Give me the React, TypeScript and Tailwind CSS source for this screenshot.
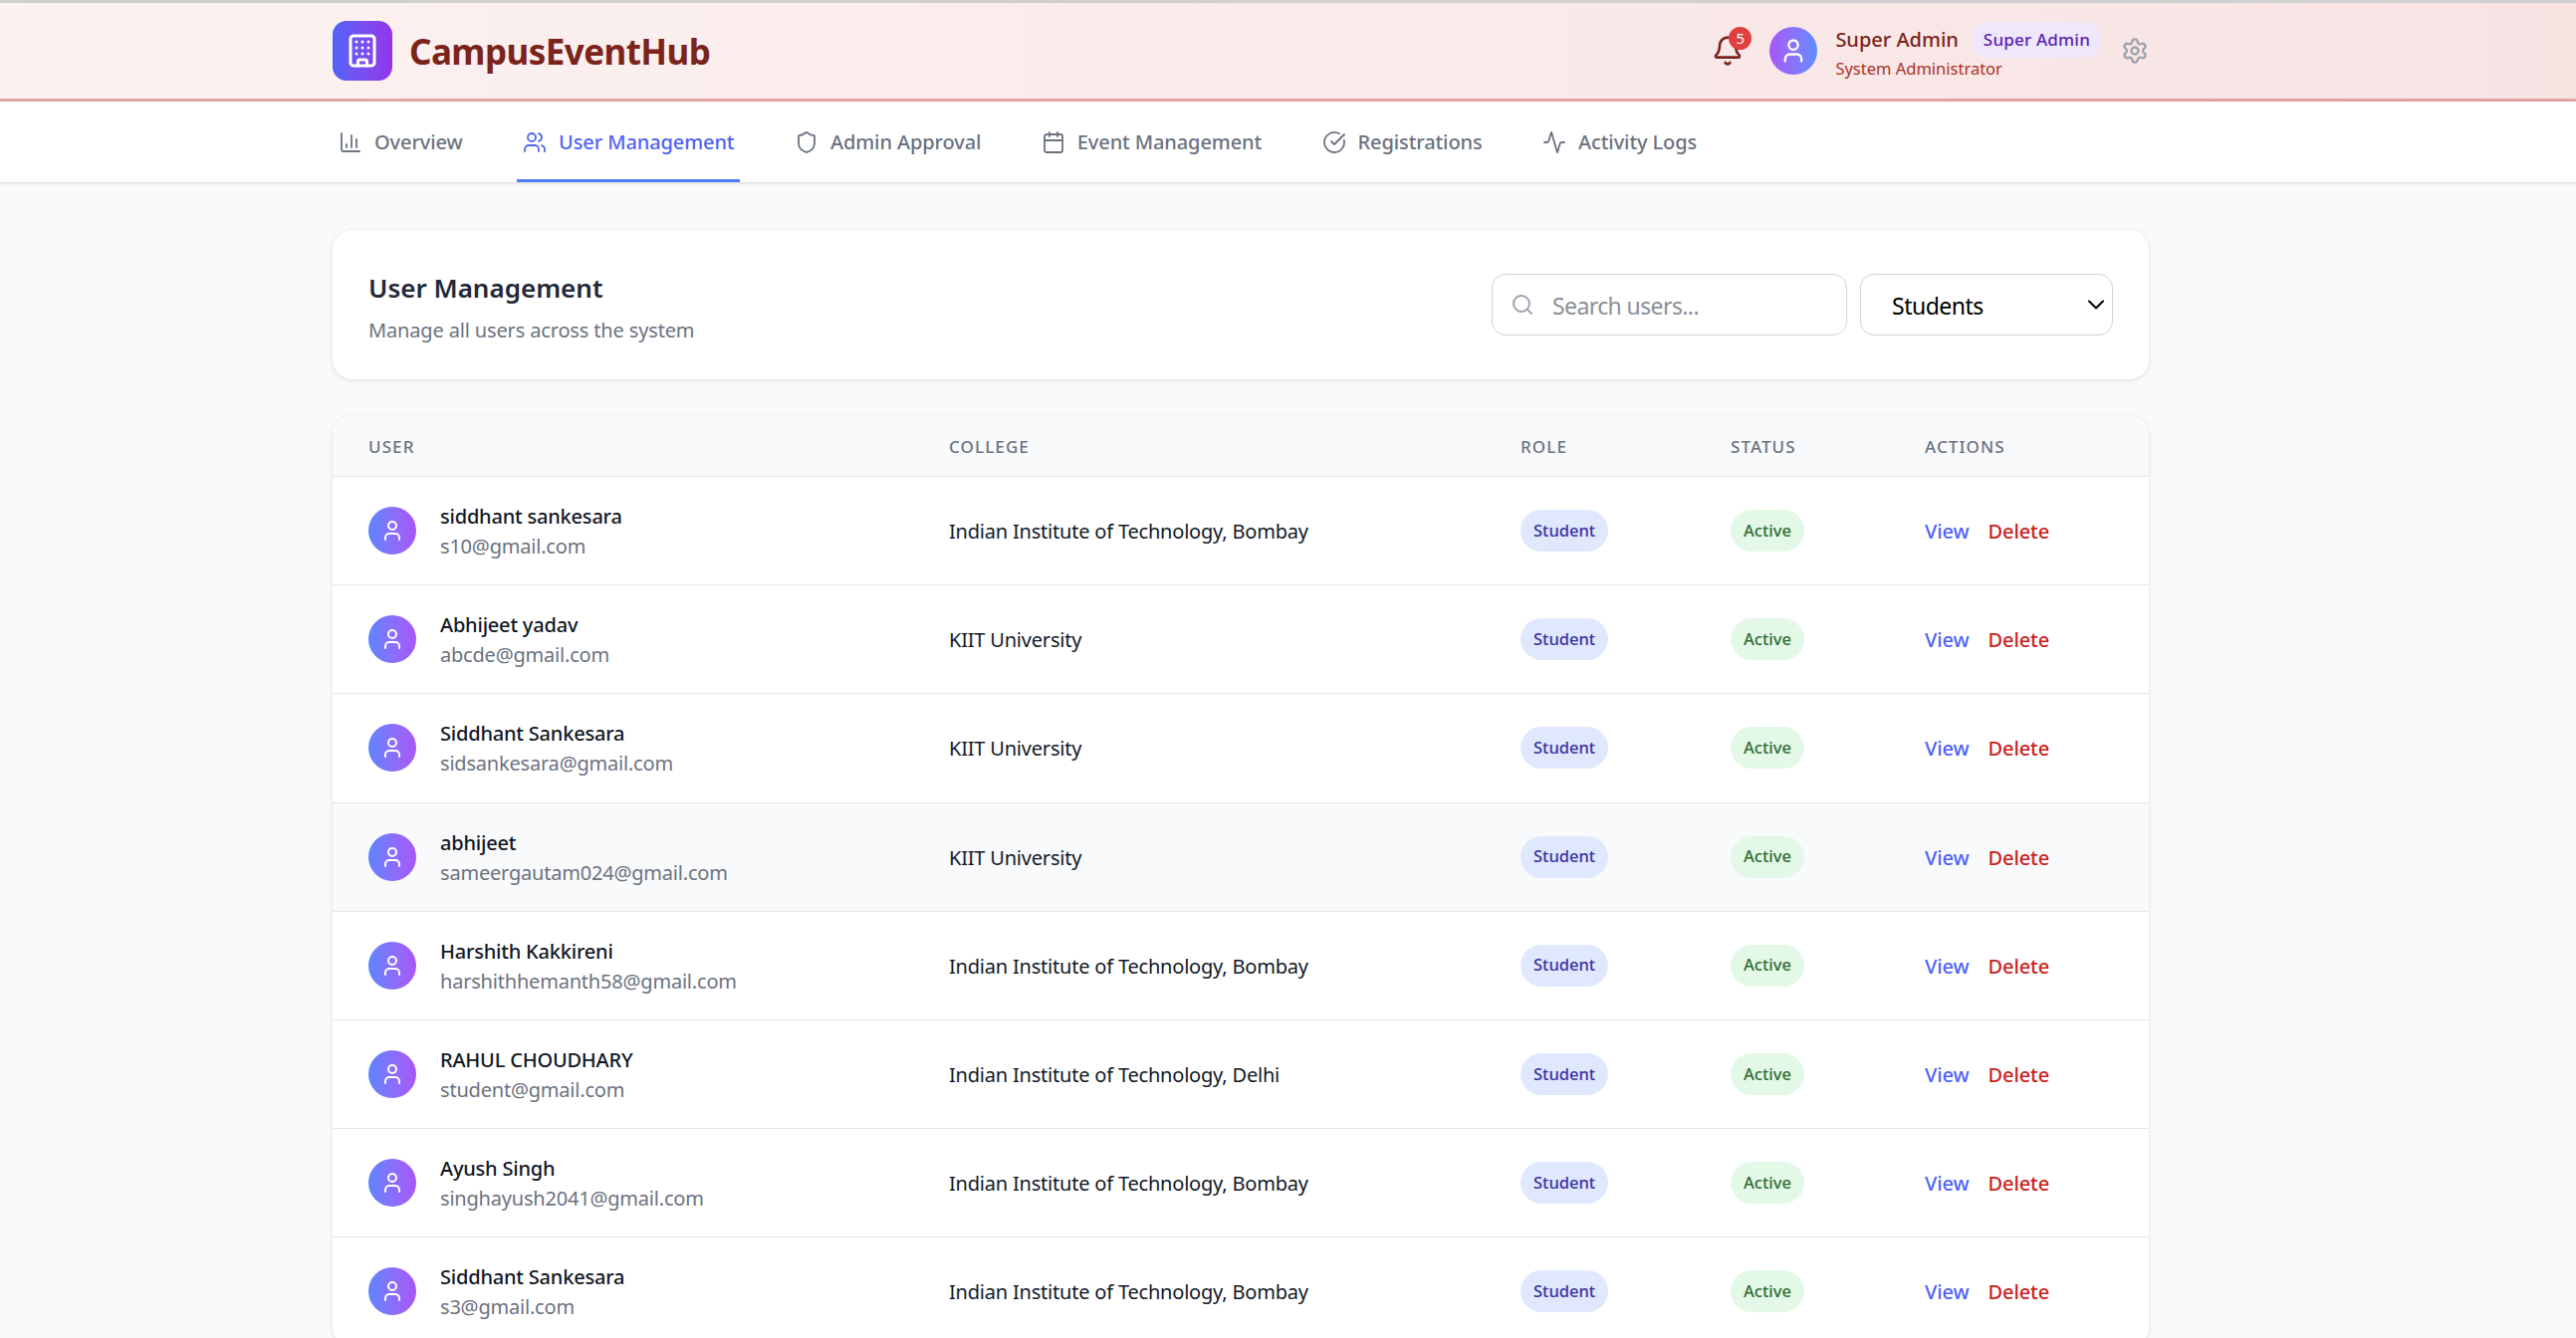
import { Activity, Bell, Building, Calendar, ChartColumn, ChevronDown, CircleCheckBig, Search, Settings, Shield, User, Users } from "lucide-react";

const tabs = [
  { label: "Overview", icon: ChartColumn },
  { label: "User Management", icon: Users, active: true },
  { label: "Admin Approval", icon: Shield },
  { label: "Event Management", icon: Calendar },
  { label: "Registrations", icon: CircleCheckBig },
  { label: "Activity Logs", icon: Activity },
];

const users = [
  { name: "siddhant sankesara", email: "s10@gmail.com", college: "Indian Institute of Technology, Bombay" },
  { name: "Abhijeet yadav", email: "abcde@gmail.com", college: "KIIT University" },
  { name: "Siddhant Sankesara", email: "sidsankesara@gmail.com", college: "KIIT University" },
  { name: "abhijeet", email: "sameergautam024@gmail.com", college: "KIIT University", hover: true },
  { name: "Harshith Kakkireni", email: "harshithhemanth58@gmail.com", college: "Indian Institute of Technology, Bombay" },
  { name: "RAHUL CHOUDHARY", email: "student@gmail.com", college: "Indian Institute of Technology, Delhi" },
  { name: "Ayush Singh", email: "singhayush2041@gmail.com", college: "Indian Institute of Technology, Bombay" },
  { name: "Siddhant Sankesara", email: "s3@gmail.com", college: "Indian Institute of Technology, Bombay" },
];

const cols = "grid grid-cols-[583px_574px_211px_195px_1fr] px-9";

export default function App() {
  return (
    <div className="h-[1344px] overflow-hidden bg-[#f9fafb] font-['Noto_Sans',sans-serif]">
      <header className="h-[102px] border-t-[3px] border-t-[#d0d0d0] border-b-[3px] border-b-[#e5a5a5] bg-gradient-to-r from-[#fcf3f1] to-[#f8e3e3]">
        <div className="w-[1824px] ml-[334px] h-full flex items-center justify-between">
          <div className="flex items-center gap-[17px]">
            <div className="w-[60px] h-[60px] rounded-[14px] bg-gradient-to-r from-[#4f63f6] to-[#9333ea] flex items-center justify-center">
              <Building className="w-9 h-9 text-white" strokeWidth={2} />
            </div>
            <h1 className="pt-[3px] text-[35px] font-bold text-[#7b241c] tracking-[-0.55px]">CampusEventHub</h1>
          </div>
          <div className="flex items-center">
            <div className="relative mr-[26px]">
              <Bell className="w-8 h-8 text-[#7b241c]" />
              <span className="absolute -top-2 -right-2 w-[23px] h-[23px] rounded-full bg-[#e04040] text-white text-[15px] flex items-center justify-center">5</span>
            </div>
            <div className="w-12 h-12 rounded-full bg-gradient-to-r from-[#a855f7] to-[#5b8cff] flex items-center justify-center mr-[18px]">
              <User className="w-7 h-7 text-white" />
            </div>
            <div>
              <div className="flex items-center gap-[13px]">
                <span className="text-[20px] font-medium text-[#7b241c]">Super Admin</span>
                <span className="h-9 flex items-center text-[17px] font-medium text-[#5b21b6] bg-[#efe7fa] rounded-full px-3 tracking-[0.2px]">Super Admin</span>
              </div>
              <div className="text-[16.5px] leading-[22px] text-[#a93226]">System Administrator</div>
            </div>
            <Settings className="w-7 h-7 text-[#9ca3af] ml-[19px]" />
          </div>
        </div>
      </header>

      <nav className="h-[81px] bg-white shadow-[0_1px_3px_rgba(0,0,0,0.15)]">
        <div className="w-[1824px] ml-[334px] h-full flex gap-[48.5px]">
          {tabs.map((t) => (
            <div
              key={t.label}
              className={
                t.active
                  ? "flex items-center gap-3 px-1.5 h-full border-y-[3px] border-t-transparent border-b-[#4f7df5] text-[#4f63f6] text-[20px] font-medium tracking-[-0.1px]"
                  : "flex items-center gap-3 px-1.5 h-full border-y-[3px] border-transparent text-[#6b7280] text-[20px] font-medium tracking-[-0.1px]"
              }
            >
              <t.icon className="w-6 h-6" strokeWidth={1.8} />
              <span>{t.label}</span>
            </div>
          ))}
        </div>
      </nav>

      <main className="w-[1824px] ml-[334px] pt-[48px]">
        <section className="h-[150px] bg-white rounded-[20px] shadow-[0_1px_4px_rgba(0,0,0,0.12)] px-9 flex items-center justify-between">
          <div className="pt-[5px]">
            <h2 className="text-[26px] leading-[36px] font-semibold text-[#1f2937]">User Management</h2>
            <p className="text-[20px] leading-[30px] mt-[10px] text-[#6b7280] tracking-[-0.15px]">Manage all users across the system</p>
          </div>
          <div className="flex gap-[13px]">
            <div className="w-[357px] h-[62px] border border-[#d1d5db] rounded-[14px] flex items-center pl-[18px] gap-[18px]">
              <Search className="w-[24px] h-[24px] text-[#9ca3af]" />
              <span className="pt-0.5 text-[23px] text-[#8a8f98] tracking-[-0.6px]">Search users...</span>
            </div>
            <div className="w-[254px] h-[62px] border border-[#d1d5db] rounded-[14px] flex items-center justify-between pl-[31px] pr-0.5">
              <span className="pt-0.5 text-[23px] text-black tracking-[-0.5px]">Students</span>
              <ChevronDown className="w-7 h-7 text-black" strokeWidth={1.8} />
            </div>
          </div>
        </section>

        <section className="mt-[36px] bg-white rounded-[20px] shadow-[0_1px_4px_rgba(0,0,0,0.12)] overflow-hidden">
          <div className={`${cols} h-[62px] items-center bg-[#f9fafb] border-b border-[#e5e7eb] text-[17px] font-medium text-[#6b7280] tracking-[1.1px]`}>
            <div className="pt-0.5">USER</div>
            <div className="pt-0.5">COLLEGE</div>
            <div className="pt-0.5">ROLE</div>
            <div className="pt-0.5">STATUS</div>
            <div className="pt-0.5">ACTIONS</div>
          </div>
          {users.map((u) => (
            <div
              key={u.email}
              className={
                u.hover
                  ? `${cols} h-[109.2px] items-center border-b border-[#e5e7eb] bg-[#f9fafb]`
                  : `${cols} h-[109.2px] items-center border-b border-[#e5e7eb]`
              }
            >
              <div className="flex items-center gap-6">
                <div className="w-12 h-12 rounded-full bg-gradient-to-r from-[#5b84ff] to-[#a855f7] flex items-center justify-center">
                  <User className="w-6 h-6 text-white" />
                </div>
                <div className="pt-0.5 tracking-[-0.2px]">
                  <div className="text-[20px] leading-[30px] font-medium text-[#111827]">{u.name}</div>
                  <div className="text-[20px] leading-[30px] text-[#6b7280]">{u.email}</div>
                </div>
              </div>
              <div className="pt-0.5 text-[20px] text-[#111827] tracking-[-0.2px]">{u.college}</div>
              <div>
                <span className="inline-flex items-center h-[42px] rounded-full bg-[#dfe8fc] text-[#3730a3] text-[16.5px] font-medium px-[13px]">Student</span>
              </div>
              <div>
                <span className="inline-flex items-center h-[42px] rounded-full bg-[#e3f8e6] text-[#2f6b35] text-[16.5px] font-medium px-[13px]">Active</span>
              </div>
              <div className="flex gap-[19px] pt-0.5 text-[20px] font-medium tracking-[-0.1px]">
                <span className="text-[#4f63f6]">View</span>
                <span className="text-[#cc1f1f]">Delete</span>
              </div>
            </div>
          ))}
        </section>
      </main>
    </div>
  );
}
